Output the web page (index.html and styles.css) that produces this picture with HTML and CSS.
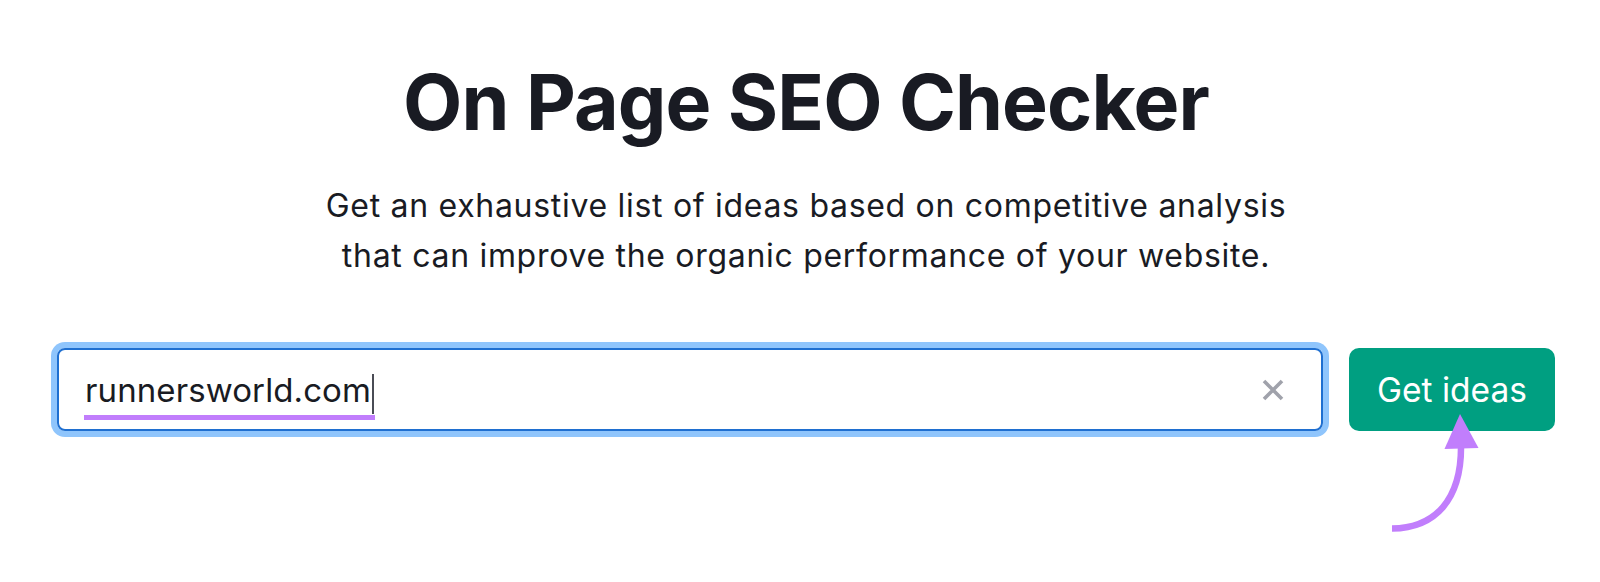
FILE: index.html
```html
<!DOCTYPE html>
<html lang="en">
<head>
<meta charset="utf-8">
<title>On Page SEO Checker</title>
<link rel="stylesheet" href="styles.css">
</head>
<body>
<main class="page">
  <h1 class="title">On Page SEO Checker</h1>
  <p class="lead">Get an exhaustive list of ideas based on competitive analysis<br>that can improve the organic performance of your website.</p>
  <form class="search" onsubmit="return false">
    <div class="field">
      <span class="value">runnersworld.com</span><span class="caret"></span>
      <button type="button" class="clear" aria-label="Clear">
        <svg class="clear-icon" viewBox="0 0 22 22"><path d="M2 2 L20 20 M20 2 L2 20" stroke="#a0a2ab" stroke-width="3.6" stroke-linecap="butt" fill="none"/></svg>
      </button>
    </div>
    <button type="submit" class="go">Get ideas</button>
  </form>
  <svg class="pointer" width="1600" height="582" viewBox="0 0 1600 582">
    <path d="M1392 528.5 C1435 528, 1462 500, 1461 444" stroke="#c17efc" stroke-width="6.5" fill="none" stroke-linecap="butt"/>
    <polygon points="1460,414 1444.5,449 1478.5,448" fill="#c17efc"/>
  </svg>
</main>
</body>
</html>
```

FILE: styles.css
```css
* { box-sizing: border-box; }

html, body {
  margin: 0;
  padding: 0;
  background: #ffffff;
}

body {
  font-family: "Inter", "Noto Sans", sans-serif;
  color: #191b23;
  width: 1600px;
  height: 582px;
  overflow: hidden;
}

.page {
  position: relative;
  width: 1600px;
  height: 582px;
  padding: 64px 45px 0 57px;
}

.title {
  margin: 0;
  font-size: 77px;
  line-height: 77px;
  font-weight: 700;
  text-align: center;
  letter-spacing: -0.9px;
}

.lead {
  margin: 40px 0 0;
  font-size: 32px;
  line-height: 50px;
  font-weight: 400;
  text-align: center;
  letter-spacing: 0.7px;
}

.search {
  margin-top: 67px;
  display: flex;
  gap: 26px;
  height: 83px;
}

.field {
  flex: 1;
  display: flex;
  align-items: center;
  border: 2px solid #1f6fd0;
  border-radius: 8px;
  box-shadow: 0 0 0 6px #8fc5fc;
  padding: 0 37px 0 26px;
}

.value {
  position: relative;
  font-size: 33px;
  letter-spacing: 0.1px;
  color: #191b23;
}

.value::after {
  content: "";
  position: absolute;
  left: -1px;
  right: -4px;
  top: 45px;
  height: 5px;
  background: #c17efc;
}

.caret {
  width: 1.5px;
  height: 40px;
  background: #4a4c55;
  margin-left: 1px;
  align-self: center;
  margin-top: 8px;
}

.clear {
  margin-left: auto;
  border: 0;
  background: none;
  padding: 0;
  flex: 0 0 22px;
  width: 22px;
  height: 22px;
  display: block;
}

.clear-icon {
  display: block;
  width: 22px;
  height: 22px;
}

.go {
  width: 206px;
  border: 0;
  border-radius: 10px;
  background: #009f81;
  color: #ffffff;
  font-family: "Inter", "Noto Sans", sans-serif;
  font-size: 33.5px;
  font-weight: 400;
  padding: 0;
}

.pointer {
  position: absolute;
  left: 0;
  top: 0;
  pointer-events: none;
}
```
